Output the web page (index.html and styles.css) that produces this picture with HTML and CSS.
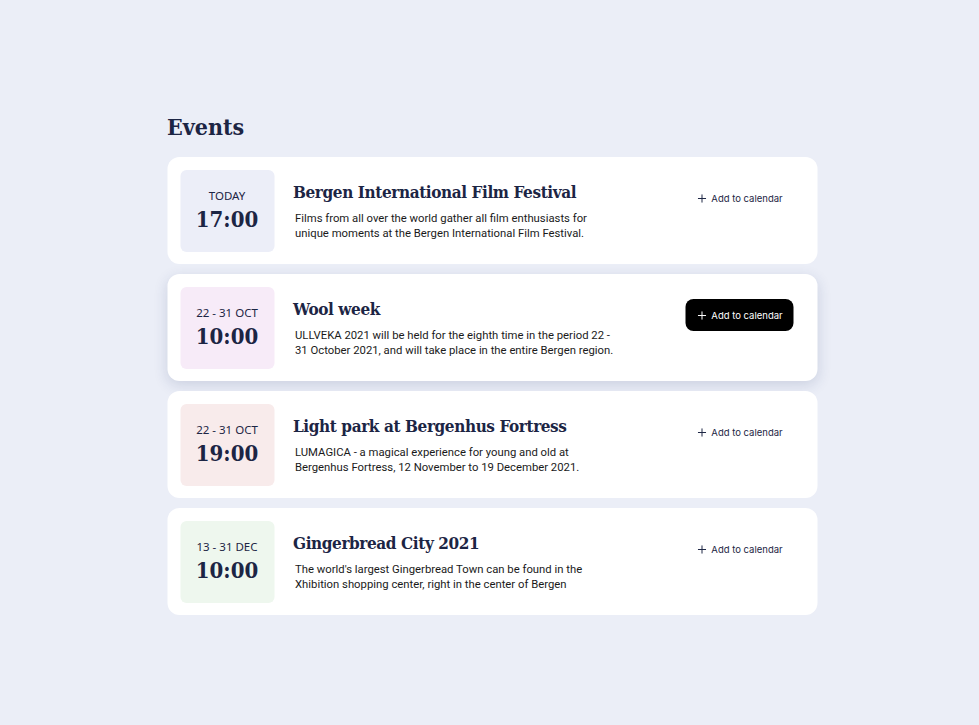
FILE: index.html
```html
<!DOCTYPE html>
<html lang="en">
<head>
<meta charset="utf-8">
<title>Events</title>
<link rel="stylesheet" href="styles.css">
</head>
<body>
<main class="events">
  <h1 class="events-title">Events</h1>
  <ul class="event-list">
    <li class="event">
      <div class="date date-blue">
        <span class="date-label">TODAY</span>
        <span class="date-time">17:00</span>
      </div>
      <div class="event-body">
        <h2 class="event-name">Bergen International Film Festival</h2>
        <p class="event-desc">Films from all over the world gather all film enthusiasts for unique moments at the Bergen International Film Festival.</p>
      </div>
      <button class="cal-btn"><svg class="plus" viewBox="0 0 10 10" width="9" height="9"><path d="M5 0.5V9.5M0.5 5H9.5" stroke="currentColor" stroke-width="1.1" fill="none"/></svg>Add to calendar</button>
    </li>
    <li class="event event-active">
      <div class="date date-pink">
        <span class="date-label">22 - 31 OCT</span>
        <span class="date-time">10:00</span>
      </div>
      <div class="event-body">
        <h2 class="event-name">Wool week</h2>
        <p class="event-desc">ULLVEKA 2021 will be held for the eighth time in the period 22 - 31 October 2021, and will take place in the entire Bergen region.</p>
      </div>
      <button class="cal-btn cal-btn-active"><svg class="plus" viewBox="0 0 10 10" width="9" height="9"><path d="M5 0.5V9.5M0.5 5H9.5" stroke="currentColor" stroke-width="1.1" fill="none"/></svg>Add to calendar</button>
    </li>
    <li class="event">
      <div class="date date-red">
        <span class="date-label">22 - 31 OCT</span>
        <span class="date-time">19:00</span>
      </div>
      <div class="event-body">
        <h2 class="event-name">Light park at Bergenhus Fortress</h2>
        <p class="event-desc">LUMAGICA - a magical experience for young and old at Bergenhus Fortress, 12 November to 19 December 2021.</p>
      </div>
      <button class="cal-btn"><svg class="plus" viewBox="0 0 10 10" width="9" height="9"><path d="M5 0.5V9.5M0.5 5H9.5" stroke="currentColor" stroke-width="1.1" fill="none"/></svg>Add to calendar</button>
    </li>
    <li class="event">
      <div class="date date-green">
        <span class="date-label">13 - 31 DEC</span>
        <span class="date-time">10:00</span>
      </div>
      <div class="event-body">
        <h2 class="event-name">Gingerbread City 2021</h2>
        <p class="event-desc">The world's largest Gingerbread Town can be found in the Xhibition shopping center, right in the center of Bergen</p>
      </div>
      <button class="cal-btn"><svg class="plus" viewBox="0 0 10 10" width="9" height="9"><path d="M5 0.5V9.5M0.5 5H9.5" stroke="currentColor" stroke-width="1.1" fill="none"/></svg>Add to calendar</button>
    </li>
  </ul>
</main>
</body>
</html>
```

FILE: styles.css
```css
* { box-sizing: border-box; }
html, body { margin: 0; padding: 0; }
body {
  background: #ebeef7;
  font-family: "Noto Sans", "Open Sans", sans-serif;
  color: #1c2544;
  width: 979px;
  height: 725px;
}
.events {
  width: 650px;
  margin: 0 auto;
  padding-top: 112px;
  transform: translateX(2.5px);
}
.events-title,
.date-time,
.event-name {
  font-family: "DejaVu Serif Condensed", "DejaVu Serif", serif;
  font-stretch: condensed;
  font-weight: bold;
  color: #1c2544;
}
.events-title {
  font-size: 23px;
  line-height: 30px;
  margin: 0 0 15px;
}
.event-list {
  list-style: none;
  margin: 0;
  padding: 0;
  display: flex;
  flex-direction: column;
  gap: 10px;
}
.event {
  background: #fff;
  border-radius: 12px;
  height: 107px;
  padding: 13px 24px 12px 13px;
  display: flex;
  align-items: flex-start;
}
.event-active {
  box-shadow: 0 4px 14px rgba(40, 55, 110, 0.16);
}
.date {
  width: 94px;
  height: 82px;
  border-radius: 6px;
  flex: none;
  display: flex;
  flex-direction: column;
  align-items: center;
  justify-content: center;
}
.date-blue { background: #eceef8; }
.date-pink { background: #f7ebf8; }
.date-red { background: #f8ebeb; }
.date-green { background: #eef7ee; }
.date-label {
  font-size: 11.5px;
  line-height: 16px;
  color: #1c2544;
  margin-top: -1px;
}
.date-time {
  font-size: 22px;
  line-height: 30px;
}
.event-body {
  flex: 1;
  padding-left: 19px;
  padding-top: 10px;
}
.event-name {
  font-size: 17px;
  line-height: 24px;
  letter-spacing: -0.4px;
  margin: 0 0 7px;
}
.event-desc {
  font-family: "Roboto", sans-serif;
  font-size: 11.3px;
  line-height: 15px;
  color: #1a1a1a;
  margin: 0;
  padding-left: 2px;
  max-width: 324px;
}
.cal-btn {
  flex: none;
  margin-top: 12px;
  width: 108px;
  height: 32px;
  border: none;
  border-radius: 8px;
  background: transparent;
  color: #1c2544;
  font-family: "Inter", sans-serif;
  font-size: 9.5px;
  display: flex;
  align-items: center;
  justify-content: center;
  gap: 5px;
  padding: 0 0 0 2px;
  cursor: pointer;
}
.cal-btn-active {
  background: #000;
  color: #fff;
}
.plus { display: block; }
```
